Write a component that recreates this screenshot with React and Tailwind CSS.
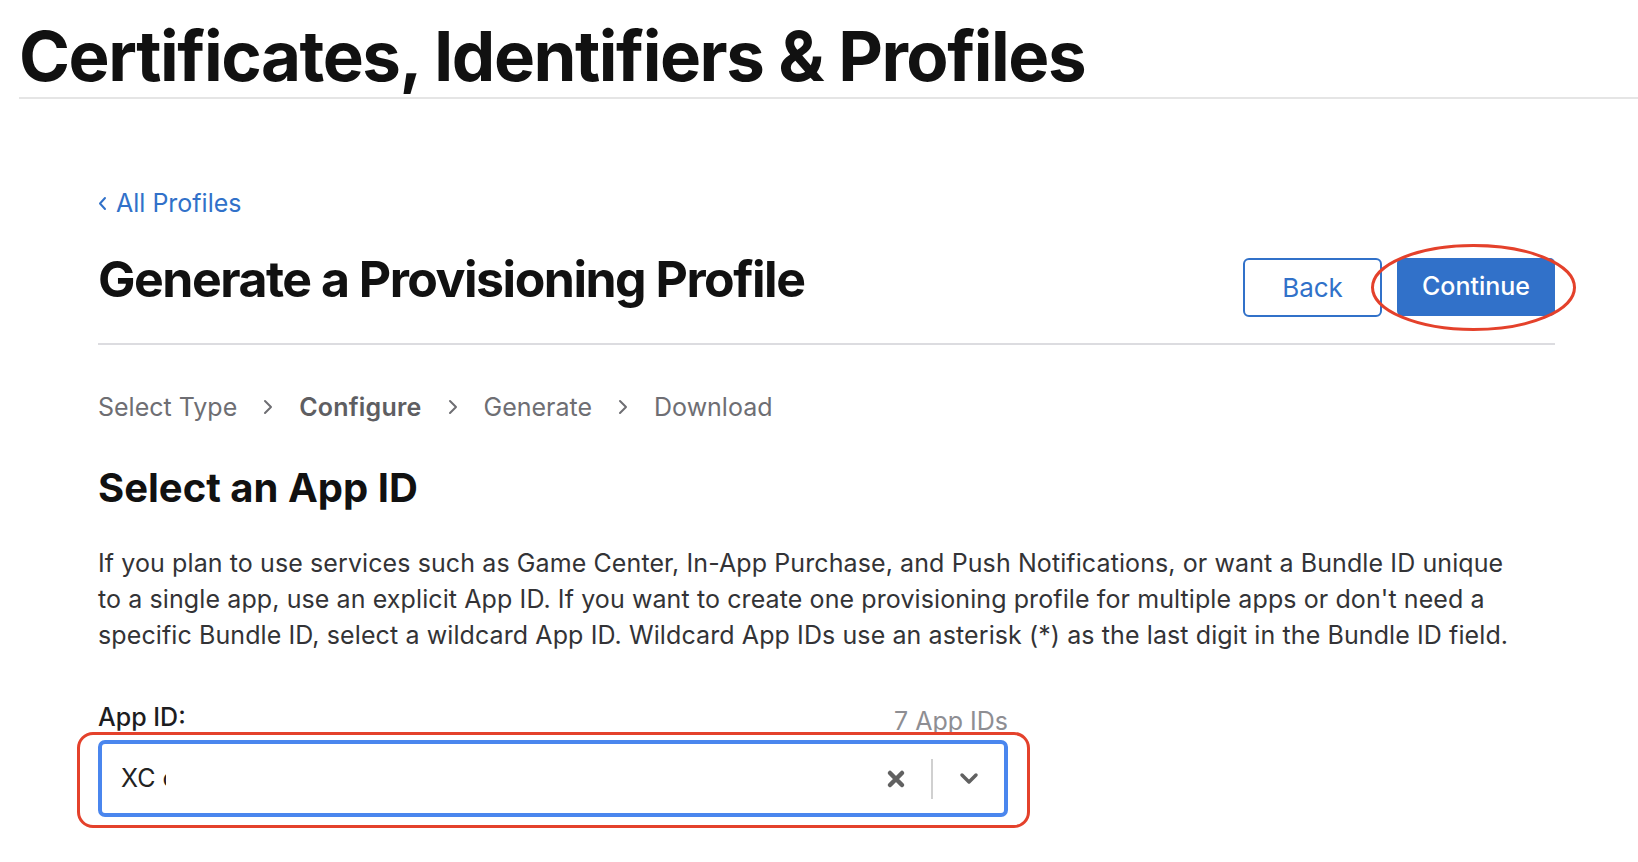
import React from "react";

const font = { fontFamily: "Inter, 'Liberation Sans', sans-serif" };

function Chevron() {
  return (
    <svg width="10" height="16" viewBox="0 0 10 16" className="mx-[26px]">
      <polyline points="2,2 8,8 2,14" fill="none" stroke="#6e6e73" strokeWidth="2" strokeLinecap="round" strokeLinejoin="round" />
    </svg>
  );
}

export default function App() {
  return (
    <div className="min-h-[862px] w-[1638px] bg-white overflow-hidden" style={font}>
      <div className="ml-[19px] pt-[21px] pb-[6px] border-b-2 border-[#e5e5e5]">
        <h1 className="text-[69px] leading-[70px] font-bold text-[#111] tracking-[-1.45px]">
          Certificates, Identifiers &amp; Profiles
        </h1>
      </div>

      <div className="ml-[98px] w-[1457px] flex flex-col">
        <a className="mt-[89px] text-[25px] leading-[30px] text-[#3171c9] flex items-center gap-[9px]">
          <svg width="9" height="15" viewBox="0 0 9 15">
            <polyline points="7,2 2,7.5 7,13" fill="none" stroke="#3171c9" strokeWidth="2" strokeLinecap="round" strokeLinejoin="round" />
          </svg>
          <span>All Profiles</span>
        </a>

        <div className="mt-[31px] flex items-start justify-between">
          <h2 className="text-[50px] leading-[60px] font-bold text-[#111] tracking-[-1.5px]">
            Generate a Provisioning Profile
          </h2>
          <div className="mt-[9px] flex gap-[15px] relative">
            <button className="w-[139px] h-[59px] rounded-[6px] border-2 border-[#3171c9] text-[#3171c9] text-[26px] bg-white">
              Back
            </button>
            <button className="w-[158px] h-[58px] rounded-[5px] bg-[#3171c9] text-white text-[25px] font-medium">
              Continue
            </button>
            <svg className="absolute left-[127px] top-[-15px] pointer-events-none" width="207" height="89" viewBox="0 0 207 89">
              <ellipse cx="103.5" cy="44.5" rx="101" ry="42" fill="none" stroke="#e4412b" strokeWidth="3" />
            </svg>
          </div>
        </div>

        <div className="mt-[26px] h-[2px] bg-[#dcdce0]" />

        <div className="mt-[47px] flex items-center text-[25px] leading-[30px] text-[#6e6e73]">
          <span>Select Type</span>
          <Chevron />
          <span className="font-semibold text-[#5e5e62] tracking-[0.2px]">Configure</span>
          <Chevron />
          <span>Generate</span>
          <Chevron />
          <span>Download</span>
        </div>

        <h3 className="mt-[42px] text-[40px] leading-[48px] font-bold text-[#111] tracking-[0px]">Select an App ID</h3>

        <p className="mt-[33px] w-[1470px] text-[25px] leading-[36px] text-[#333336] tracking-[0.1px]">
          <span className="block whitespace-nowrap">If you plan to use services such as Game Center, In-App Purchase, and Push Notifications, or want a Bundle ID unique</span>
          <span className="block whitespace-nowrap">to a single app, use an explicit App ID. If you want to create one provisioning profile for multiple apps or don't need a</span>
          <span className="block whitespace-nowrap">specific Bundle ID, select a wildcard App ID. Wildcard App IDs use an asterisk (*) as the last digit in the Bundle ID field.</span>
        </p>

        <div className="mt-[49px] w-[910px] flex items-end justify-between">
          <span className="text-[25px] leading-[30px] text-[#1d1d1f] font-medium">App ID:</span>
          <span className="text-[25px] leading-[30px] text-[#8e8e93] translate-y-[4px]">7 App IDs</span>
        </div>

        <div className="mt-[8px] relative w-[910px]">
          <div className="h-[77px] rounded-[7px] border-4 border-[#4a86ee] flex items-center pl-[19px] pr-[24px]">
            <span className="text-[25px] text-[#222]">XC</span>
            <span className="ml-[7px] w-[4px] overflow-hidden text-[25px] text-[#222]">c</span>
            <div className="flex-1" />
            <svg width="20" height="20" viewBox="0 0 20 20" className="mr-[25px]">
              <path d="M4 4 L16 16 M16 4 L4 16" stroke="#616161" strokeWidth="4.5" strokeLinecap="round" />
            </svg>
            <div className="w-[2px] h-[40px] bg-[#d0d0d0]" />
            <svg width="22" height="14" viewBox="0 0 22 14" className="ml-[25px]">
              <polyline points="4,3 11,10 18,3" fill="none" stroke="#616161" strokeWidth="3.5" strokeLinecap="round" strokeLinejoin="round" />
            </svg>
          </div>
          <div className="absolute left-[-21px] top-[-8px] right-[-22px] bottom-[-11px] rounded-[16px] border-[3px] border-[#e4412b] pointer-events-none" />
        </div>
      </div>
    </div>
  );
}
